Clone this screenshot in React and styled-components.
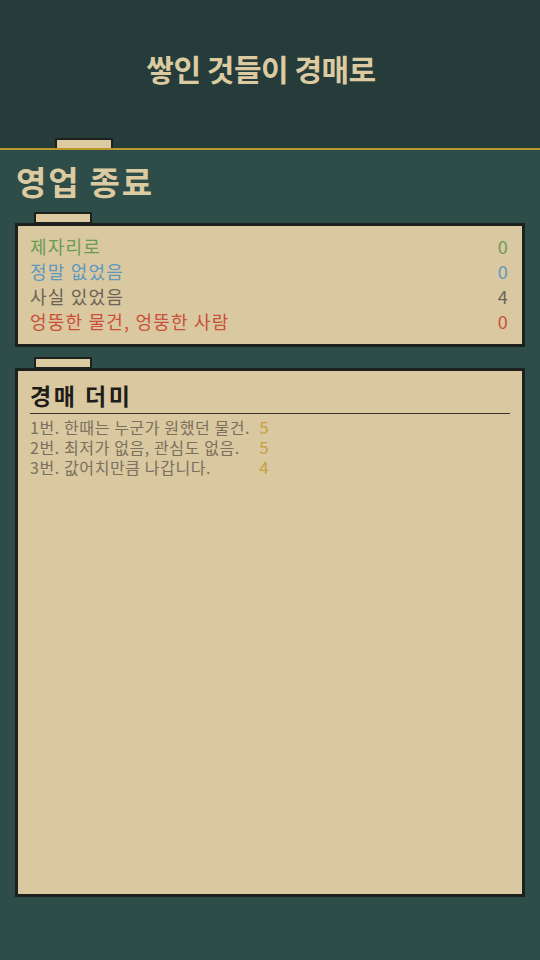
import React from 'react'
import styled, { createGlobalStyle } from 'styled-components'

const GlobalStyle = createGlobalStyle`
  html, body {
    margin: 0;
    padding: 0;
    background: #2e4d49;
  }
  body {
    font-family: "Noto Sans CJK KR", "Noto Sans", sans-serif;
  }
  * { box-sizing: border-box; }
`

const Page = styled.div`
  min-height: 960px;
  background: #2e4d49;
`

const Header = styled.header`
  height: 150px;
  display: flex;
  flex-direction: column;
  background: #253c3a;
  border-bottom: 2px solid #b8972f;
`

const Title = styled.h1`
  flex: 1;
  margin: 0;
  display: flex;
  align-items: center;
  justify-content: center;
  padding: 0 18px 3px 0;
  color: #dccaa0;
  font-size: 30px;
  font-weight: 700;
  letter-spacing: -0.5px;
`

const Tab = styled.div`
  width: ${p => p.w || 58}px;
  height: ${p => p.h || 12}px;
  margin-left: ${p => p.left || 0}px;
  background: #dccaa0;
  border: 2px solid #1c211e;
  border-bottom: ${p => (p.open ? 'none' : '2px solid #1c211e')};
`

const Main = styled.main`
  padding: 0 15px;
`

const Heading = styled.h2`
  margin: 0;
  padding: 9px 0 0 1px;
  height: 62px;
  color: #dccaa0;
  font-size: 33px;
  font-weight: 700;
  line-height: 44px;
  letter-spacing: 1.8px;
`

const Section = styled.section`
  margin-bottom: ${p => p.gap || 0}px;
`

const Panel = styled.div`
  margin-top: -1px;
  height: ${p => p.h}px;
  background: #d9c8a0;
  border: 3px solid #1c211e;
  padding: ${p => p.pad};
`

const StatRow = styled.div`
  display: flex;
  justify-content: space-between;
  align-items: center;
  height: 25px;
  font-size: 18px;
  letter-spacing: 1.2px;
  color: ${p => p.color};
`

const PileTitle = styled.h3`
  margin: 0;
  height: 43px;
  padding-top: 9px;
  color: #1e1d19;
  font-size: 23px;
  font-weight: 700;
  line-height: 30px;
  letter-spacing: 2.5px;
  border-bottom: 1px solid #3a352b;
`

const PileList = styled.div`
  display: grid;
  grid-template-columns: max-content max-content;
  column-gap: 9px;
  padding-top: 3px;
`

const PileName = styled.div`
  line-height: 20px;
  font-size: 16px;
  letter-spacing: 0.6px;
  color: #7a705e;
  white-space: nowrap;
`

const PileCount = styled(PileName)`
  color: #c8a040;
  font-size: 17px;
`

const stats = [
  { label: '제자리로', value: 0, color: '#6b9a57' },
  { label: '정말 없었음', value: 0, color: '#5f98be' },
  { label: '사실 있었음', value: 4, color: '#6a6456' },
  { label: '엉뚱한 물건, 엉뚱한 사람', value: 0, color: '#c9503a' },
]

const pile = [
  { name: '1번. 한때는 누군가 원했던 물건.', count: 5 },
  { name: '2번. 최저가 없음, 관심도 없음.', count: 5 },
  { name: '3번. 값어치만큼 나갑니다.', count: 4 },
]

export default function App() {
  return (
    <Page>
      <GlobalStyle />
      <Header>
        <Title>쌓인 것들이 경매로</Title>
        <Tab left={55} h={10} open />
      </Header>
      <Main>
        <Heading>영업 종료</Heading>
        <Section gap={10}>
          <Tab left={19} />
          <Panel h={124} pad="7px 13px 0 12px">
            {stats.map(s => (
              <StatRow key={s.label} color={s.color}>
                <span>{s.label}</span>
                <span>{s.value}</span>
              </StatRow>
            ))}
          </Panel>
        </Section>
        <Section>
          <Tab left={19} />
          <Panel h={529} pad="0 12px 0 12px">
            <PileTitle>경매 더미</PileTitle>
            <PileList>
              {pile.map(p => (
                <React.Fragment key={p.name}>
                  <PileName>{p.name}</PileName>
                  <PileCount>{p.count}</PileCount>
                </React.Fragment>
              ))}
            </PileList>
          </Panel>
        </Section>
      </Main>
    </Page>
  )
}
